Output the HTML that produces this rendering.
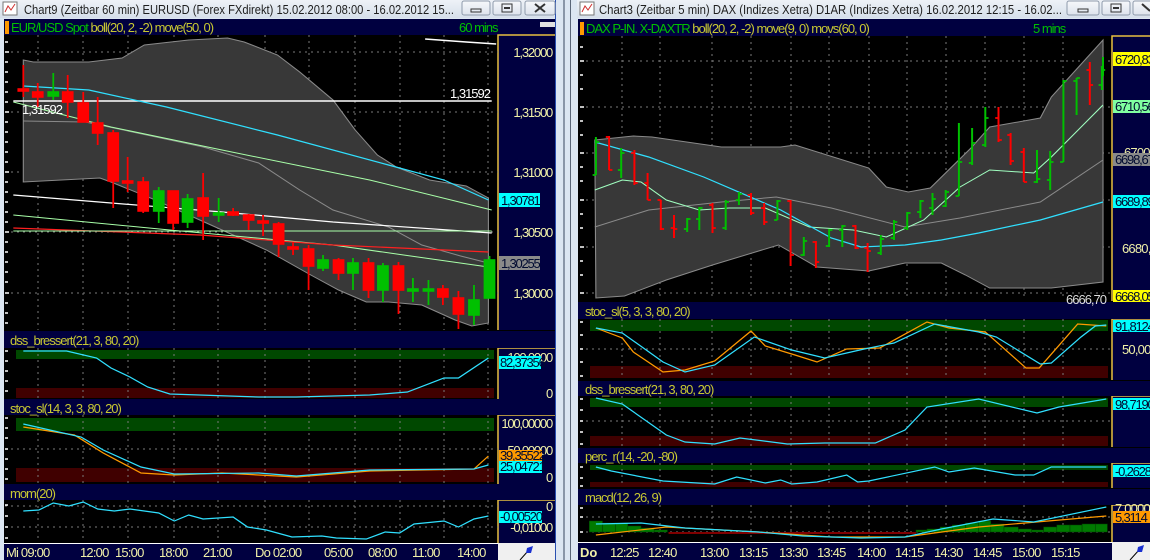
<!DOCTYPE html>
<html><head><meta charset="utf-8"><style>
html,body{margin:0;padding:0;background:#dce6f2;}
svg{display:block;font-family:"Liberation Sans",sans-serif;}
.t{font-size:12.5px;fill:#1e1e1e}
.h{font-size:13px;fill:#c8c832;letter-spacing:-1px}
.hg{font-size:13px;fill:#00c000;letter-spacing:-1px}
.p{font-size:13px;fill:#f0f0a8;text-anchor:end;letter-spacing:-1.2px}
.tm{font-size:13px;fill:#f0f0a8;letter-spacing:-0.8px}
.b{font-size:13px;fill:#000a30;letter-spacing:-1.2px}
</style></head><body>
<svg width="1150" height="560" viewBox="0 0 1150 560" xmlns="http://www.w3.org/2000/svg">
<defs>
<linearGradient id="tb" x1="0" y1="0" x2="0" y2="1"><stop offset="0" stop-color="#eef2f7"/><stop offset="1" stop-color="#d6dfea"/></linearGradient>
<linearGradient id="bt" x1="0" y1="0" x2="0" y2="1"><stop offset="0" stop-color="#f6f8fb"/><stop offset="1" stop-color="#dde3ec"/></linearGradient>
<clipPath id="cl"><rect x="5" y="35" width="493" height="508"/></clipPath>
<clipPath id="cr"><rect x="580" y="36" width="532" height="506"/></clipPath>
</defs>
<rect width="1150" height="560" fill="#dce6f2"/>
<rect x="555" y="0" width="1" height="560" fill="#2a50b0"/>
<rect x="563" y="0" width="2" height="560" fill="#8a96a8"/>
<rect x="570" y="0" width="1" height="560" fill="#5a6678"/>

<!-- LEFT WINDOW -->
<rect x="0" y="0" width="555" height="18" fill="url(#tb)"/>
<rect x="3" y="2" width="14" height="13" fill="#fff" stroke="#777"/>
<path d="M5 12 L8 6 L11 10 L15 4" stroke="#d03030" fill="none"/>
<text class="t" x="24" y="14" textLength="430" lengthAdjust="spacingAndGlyphs">Chart9 (Zeitbar 60 min)  EURUSD (Forex FXdirekt) 15.02.2012 08:00 - 16.02.2012 15...</text>
<rect x="462" y="1" width="28" height="14" rx="2" fill="url(#bt)" stroke="#8e9aab"/>
<rect x="471" y="9" width="10" height="3" fill="none" stroke="#333"/>
<rect x="493" y="1" width="28" height="14" rx="2" fill="url(#bt)" stroke="#8e9aab"/>
<rect x="502" y="4" width="10" height="8" fill="none" stroke="#333"/><rect x="504" y="7" width="6" height="2" fill="#333"/>
<rect x="525" y="1" width="30" height="14" rx="2" fill="url(#bt)" stroke="#8e9aab"/>
<path d="M535 4 L545 12 M545 4 L535 12" stroke="#333" stroke-width="2"/>

<rect x="4" y="19" width="551" height="524" fill="#000"/>
<rect x="4" y="19" width="551" height="16" fill="#000040"/>
<rect x="5" y="21" width="4" height="13" fill="#ff9900"/>
<text x="11" y="32"><tspan class="hg">EUR/USD Spot </tspan><tspan class="h">boll(20, 2, -2) move(50, 0)</tspan></text>
<text class="hg" x="459" y="32">60 mins</text>
<rect x="540" y="22" width="15" height="5" fill="#e0e0e0"/>

<rect x="498" y="35" width="57" height="295" fill="#000040"/>
<rect x="498" y="348" width="57" height="51" fill="#000040"/>
<rect x="498" y="415" width="57" height="69" fill="#000040"/>
<rect x="498" y="500" width="57" height="43" fill="#000040"/>
<g stroke="#e8c040" stroke-width="1.5" fill="none">
<path d="M498 330 V35 H555"/><path d="M498 399 V348 H555"/><path d="M498 484 V415 H555"/><path d="M498 543 V500 H555"/>
</g>
<rect x="4" y="331" width="551" height="17" fill="#000040"/>
<rect x="4" y="399" width="551" height="16" fill="#000040"/>
<rect x="4" y="484" width="551" height="16" fill="#000040"/>
<text class="h" x="10" y="345">dss_bressert(21, 3, 80, 20)</text>
<text class="h" x="10" y="413">stoc_sl(14, 3, 3, 80, 20)</text>
<text class="h" x="10" y="498">mom(20)</text>
<rect x="16" y="350" width="478" height="9" fill="#004800"/>
<rect x="16" y="388" width="478" height="10" fill="#400000"/>
<rect x="16" y="418" width="478" height="13" fill="#004800"/>
<rect x="16" y="468" width="478" height="14" fill="#400000"/>
<g stroke="#7a7a7a" stroke-dasharray="2,4" stroke-width="1">
<path d="M38 35V330M83 35V330M128 35V330M174 35V330M218 35V330M265 35V330M309 35V330M355 35V330M400 35V330M444 35V330M488 35V330"/>
<path d="M38 348V398M83 348V398M128 348V398M174 348V398M218 348V398M265 348V398M309 348V398M355 348V398M400 348V398M444 348V398M488 348V398"/>
<path d="M38 415V483M83 415V483M128 415V483M174 415V483M218 415V483M265 415V483M309 415V483M355 415V483M400 415V483M444 415V483M488 415V483"/>
<path d="M38 500V542M83 500V542M128 500V542M174 500V542M218 500V542M265 500V542M309 500V542M355 500V542M400 500V542M444 500V542M488 500V542"/>
<path d="M5 52H498M5 112H498M5 172H498M5 232H498M5 293H498M5 449H498M5 506H498M5 527H498"/>
</g>
<g stroke="#fff" stroke-width="1.5">
<path d="M5 42h3M5 52h4M5 62h3M5 72h3M5 82h3M5 92h3M5 102h3M5 112h4M5 122h3M5 132h3M5 142h3M5 152h3M5 162h3M5 172h4M5 182h3M5 192h3M5 202h3M5 212h3M5 222h3M5 232h4M5 242h3M5 252h3M5 262h3M5 272h3M5 282h3M5 293h4M5 303h3M5 313h3M5 323h3"/>
<path d="M5 351h3M5 361h3M5 371h3M5 381h3M5 391h3M5 418h3M5 428h3M5 438h3M5 449h3M5 459h3M5 469h3M5 479h3M5 505h3M5 516h3M5 527h3M5 538h3"/>
</g>

<g clip-path="url(#cl)"><g transform="scale(1.11,1)">
<polygon points="21,60 30,62 80,62 110,58 130,45 170,40 205,38 220,42 250,55 270,72 300,100 320,130 340,155 357,167 387,180 420,186 440,198 440,323 425,326 410,320 380,305 350,302 330,302 305,290 280,275 240,250 200,230 140,200 100,182 90,178 21,182" fill="#383838" stroke="#8a8a8a" stroke-width="1"/>
<polyline points="21,121 77,122 183,147 233,163 270,190 300,210 350,227 380,245 415,256 440,263" fill="none" stroke="#8a8a8a"/>
<polyline points="12,102 100,127 200,150 333,180 443,210" fill="none" stroke="#a8ffa8"/>
<polyline points="12,215 153,230 300,245 440,267" fill="none" stroke="#a8ffa8"/>
<polyline points="12,195 200,212 300,222 443,233" fill="none" stroke="#fff" stroke-width="1.2"/>
<polyline points="12,228 180,235 300,245 440,252" fill="none" stroke="#ff2020" stroke-width="1.2"/>
<line x1="12" y1="231" x2="443" y2="231" stroke="#a8ffa8"/>
<line x1="12" y1="101" x2="443" y2="101" stroke="#fff" stroke-width="1.5"/>
<polyline points="383,39 420,42 447,44" fill="none" stroke="#fff" stroke-width="1.5"/>
<polyline points="21,86 80,90 150,107 250,135 350,165 400,180 440,200" fill="none" stroke="#30e0ff" stroke-width="1.2"/>
<g stroke-width="1.6">
<g stroke="#ff0000" fill="#ff0000">
<line x1="21" y1="65" x2="21" y2="97"/><rect x="16.5" y="89" width="9" height="2"/>
<line x1="34" y1="83" x2="34" y2="107"/><rect x="29.5" y="92" width="9" height="5"/>
<line x1="61" y1="75" x2="61" y2="118"/><rect x="56.5" y="92" width="9" height="10"/>
<line x1="75" y1="92" x2="75" y2="122"/><rect x="70.5" y="103" width="9" height="19"/>
<line x1="88" y1="97" x2="88" y2="145"/><rect x="83.5" y="123" width="9" height="10"/>
<line x1="102" y1="130" x2="102" y2="208"/><rect x="97.5" y="133" width="9" height="48"/>
<line x1="115" y1="157" x2="115" y2="192"/><rect x="110.5" y="181" width="9" height="2"/>
<line x1="129" y1="177" x2="129" y2="213"/><rect x="124.5" y="182" width="9" height="29"/>
<line x1="156" y1="191" x2="156" y2="230"/><rect x="151.5" y="191" width="9" height="32"/>
<line x1="183" y1="173" x2="183" y2="240"/><rect x="178.5" y="198" width="9" height="18"/>
<line x1="210" y1="208" x2="210" y2="216"/><rect x="205.5" y="212" width="9" height="3"/>
<line x1="224" y1="214" x2="224" y2="230"/><rect x="219.5" y="215" width="9" height="5"/>
<line x1="237" y1="215" x2="237" y2="236"/><rect x="232.5" y="221" width="9" height="2"/>
<line x1="251" y1="222" x2="251" y2="257"/><rect x="246.5" y="224" width="9" height="20"/>
<line x1="264" y1="242" x2="264" y2="255"/><rect x="259.5" y="247" width="9" height="2"/>
<line x1="278" y1="245" x2="278" y2="290"/><rect x="273.5" y="249" width="9" height="17"/>
<line x1="305" y1="258" x2="305" y2="280"/><rect x="300.5" y="260" width="9" height="13"/>
<line x1="332" y1="258" x2="332" y2="298"/><rect x="327.5" y="263" width="9" height="27"/>
<line x1="359" y1="262" x2="359" y2="314"/><rect x="354.5" y="266" width="9" height="24"/>
<line x1="399" y1="285" x2="399" y2="305"/><rect x="394.5" y="289" width="9" height="8"/>
<line x1="413" y1="291" x2="413" y2="329"/><rect x="408.5" y="298" width="9" height="16"/>
</g>
<g stroke="#00c000" fill="#00c000">
<line x1="48" y1="73" x2="48" y2="100"/><rect x="43.5" y="92" width="9" height="4"/>
<line x1="143" y1="187" x2="143" y2="223"/><rect x="138.5" y="191" width="9" height="20"/>
<line x1="169" y1="194" x2="169" y2="228"/><rect x="164.5" y="199" width="9" height="23"/>
<line x1="197" y1="198" x2="197" y2="222"/><rect x="192.5" y="213" width="9" height="2"/>
<line x1="291" y1="255" x2="291" y2="271"/><rect x="286.5" y="260" width="9" height="8"/>
<line x1="318" y1="258" x2="318" y2="290"/><rect x="313.5" y="263" width="9" height="10"/>
<line x1="345" y1="263" x2="345" y2="302"/><rect x="340.5" y="266" width="9" height="24"/>
<line x1="372" y1="278" x2="372" y2="302"/><rect x="367.5" y="289" width="9" height="2"/>
<line x1="386" y1="280" x2="386" y2="305"/><rect x="381.5" y="289" width="9" height="2"/>
<line x1="427" y1="285" x2="427" y2="325"/><rect x="422.5" y="300" width="9" height="15"/>
<line x1="441" y1="256" x2="441" y2="298"/><rect x="436.5" y="260" width="9" height="38"/>
</g>
</g>
<polyline points="21,351 60,351 87,358 100,368 117,377 133,387 153,394 233,397 267,397 333,395 367,392 400,378 413,378 440,358" fill="none" stroke="#30e0ff" stroke-width="1.2"/>
<polyline points="21,427 67,435 93,453 127,473 157,475 200,473 267,477 333,471 427,469 440,456" fill="none" stroke="#ff9a00" stroke-width="1.2"/>
<polyline points="21,424 73,437 93,450 127,467 157,474 233,473 267,476 333,470 427,469 440,465" fill="none" stroke="#30e0ff" stroke-width="1.2"/>
<polyline points="21,511 35,510 48,503 62,506 75,502 88,509 103,511 117,509 143,513 157,521 170,515 183,519 210,517 223,527 240,530 263,537 290,536 303,538 330,539 347,532 360,533 373,524 400,521 413,527 427,519 440,516" fill="none" stroke="#30e0ff" stroke-width="1.2"/>
</g></g>
<text x="22" y="114" font-size="13" fill="#fff" letter-spacing="-1">1,31592</text>
<text x="490" y="98" font-size="13" fill="#fff" text-anchor="end" letter-spacing="-1">1,31592</text>
<text class="p" x="552" y="57">1,32000</text>
<text class="p" x="552" y="117">1,31500</text>
<text class="p" x="552" y="177">1,31000</text>
<text class="p" x="552" y="237">1,30500</text>
<text class="p" x="552" y="298">1,30000</text>
<rect x="499" y="193" width="41" height="14" fill="#00ffff"/><text class="b" x="501" y="205">1,30781</text>
<rect x="499" y="256" width="41" height="14" fill="#8a8a8a"/><text class="b" x="501" y="268">1,30255</text>
<text class="p" x="552" y="362">100,0000</text>
<rect x="499" y="356" width="42" height="13" fill="#00ffff"/><text class="b" x="500" y="367">82,37356</text>
<text class="p" x="552" y="398">0</text>
<text class="p" x="552" y="428">100,00000</text>
<text class="p" x="552" y="455">50,00000</text>
<rect x="499" y="450" width="43" height="11" fill="#ff9a00"/><text class="b" x="500" y="460">39,35522</text>
<rect x="499" y="461" width="43" height="12" fill="#00ffff"/><text class="b" x="500" y="471">25,04721</text>
<text class="p" x="552" y="482">0</text>
<text class="p" x="552" y="511">0</text>
<rect x="499" y="511" width="43" height="12" fill="#00ffff"/><text class="b" x="500" y="521">-0,00520</text>
<text class="p" x="552" y="532">-0,01000</text>
<rect x="4" y="543" width="494" height="17" fill="#000040"/>
<line x1="4" y1="543.5" x2="498" y2="543.5" stroke="#fff"/>
<text class="tm" x="6" y="557">Mi 09:00</text><text class="tm" x="80" y="557">12:00</text><text class="tm" x="115" y="557">15:00</text><text class="tm" x="159" y="557">18:00</text><text class="tm" x="203" y="557">21:00</text><text class="tm" x="255" y="557">Do 02:00</text><text class="tm" x="324" y="557">05:00</text><text class="tm" x="368" y="557">08:00</text><text class="tm" x="412" y="557">11:00</text><text class="tm" x="457" y="557">14:00</text>
<rect x="498" y="543" width="57" height="17" fill="#f0f0f0"/>
<path d="M520 560 L528 551" stroke="#000" stroke-width="1"/><path d="M527 548 L533 546 L531 553 L526 553Z" fill="#1a30d0"/>

<!-- RIGHT WINDOW -->
<rect x="577" y="0" width="573" height="18" fill="url(#tb)"/>
<rect x="580" y="2" width="14" height="13" fill="#fff" stroke="#777"/>
<path d="M582 12 L585 6 L588 10 L592 4" stroke="#d03030" fill="none"/>
<text class="t" x="599" y="14" textLength="463" lengthAdjust="spacingAndGlyphs">Chart3 (Zeitbar 5 min)  DAX (Indizes Xetra) D1AR (Indizes Xetra) 16.02.2012 12:15 - 16.02...</text>
<rect x="1067" y="1" width="32" height="14" rx="2" fill="url(#bt)" stroke="#8e9aab"/>
<rect x="1078" y="9" width="10" height="3" fill="none" stroke="#333"/>
<rect x="1102" y="1" width="28" height="14" rx="2" fill="url(#bt)" stroke="#8e9aab"/>
<rect x="1111" y="4" width="10" height="8" fill="none" stroke="#333"/><rect x="1113" y="7" width="6" height="2" fill="#333"/>
<rect x="1133" y="1" width="20" height="14" rx="2" fill="url(#bt)" stroke="#8e9aab"/>
<path d="M1142 4 L1150 11" stroke="#333" stroke-width="2"/>

<rect x="578" y="19" width="572" height="524" fill="#000"/>
<rect x="578" y="19" width="572" height="17" fill="#000040"/>
<rect x="580" y="22" width="4" height="13" fill="#ff9900"/>
<text x="586" y="33"><tspan class="hg">DAX P-IN. X-DAXTR </tspan><tspan class="h">boll(20, 2, -2) move(9, 0) movs(60, 0)</tspan></text>
<text class="hg" x="1033" y="33">5 mins</text>
<rect x="1112" y="36" width="38" height="265" fill="#000040"/>
<rect x="1112" y="319" width="38" height="61" fill="#000040"/>
<rect x="1112" y="396" width="38" height="51" fill="#000040"/>
<rect x="1112" y="463" width="38" height="25" fill="#000040"/>
<rect x="1112" y="505" width="38" height="37" fill="#000040"/>
<g stroke="#e8c040" stroke-width="1.5" fill="none">
<path d="M1112 301 V36 H1150"/><path d="M1112 380 V319 H1150"/><path d="M1112 447 V396 H1150"/><path d="M1112 488 V463 H1150"/><path d="M1112 542 V505 H1150"/>
</g>
<rect x="578" y="302" width="572" height="17" fill="#000040"/>
<rect x="578" y="381" width="572" height="15" fill="#000040"/>
<rect x="578" y="448" width="572" height="15" fill="#000040"/>
<rect x="578" y="489" width="572" height="16" fill="#000040"/>
<text class="h" x="585" y="316">stoc_sl(5, 3, 3, 80, 20)</text>
<text class="h" x="585" y="394">dss_bressert(21, 3, 80, 20)</text>
<text class="h" x="585" y="461">perc_r(14, -20, -80)</text>
<text class="h" x="585" y="502">macd(12, 26, 9)</text>
<rect x="590" y="320" width="518" height="11" fill="#004800"/>
<rect x="590" y="366" width="518" height="12" fill="#400000"/>
<rect x="590" y="398" width="518" height="9" fill="#004800"/>
<rect x="590" y="436" width="518" height="10" fill="#400000"/>
<rect x="590" y="465" width="518" height="5" fill="#004800"/>
<rect x="590" y="482" width="518" height="5" fill="#400000"/>
<g stroke="#7a7a7a" stroke-dasharray="2,4">
<path d="M622 36V300M660 36V300M712 36V300M751 36V300M791 36V300M829 36V300M869 36V300M907 36V300M946 36V300M985 36V300M1024 36V300M1063 36V300"/>
<path d="M622 319V378M660 319V378M712 319V378M751 319V378M791 319V378M829 319V378M869 319V378M907 319V378M946 319V378M985 319V378M1024 319V378M1063 319V378"/>
<path d="M622 396V446M660 396V446M712 396V446M751 396V446M791 396V446M829 396V446M869 396V446M907 396V446M946 396V446M985 396V446M1024 396V446M1063 396V446"/>
<path d="M622 463V487M660 463V487M712 463V487M751 463V487M791 463V487M829 463V487M869 463V487M907 463V487M946 463V487M985 463V487M1024 463V487M1063 463V487"/>
<path d="M622 505V541M660 505V541M712 505V541M751 505V541M791 505V541M829 505V541M869 505V541M907 505V541M946 505V541M985 505V541M1024 505V541M1063 505V541"/>
<path d="M580 61H1112M580 107H1112M580 153H1112M580 200H1112M580 247H1112M580 293H1112M580 349H1112M580 421H1112M580 517H1112M580 532H1112"/>
</g>
<g stroke="#fff" stroke-width="1.5">
<path d="M580 47h3M580 61h4M580 75h3M580 89h3M580 107h4M580 121h3M580 135h3M580 153h4M580 167h3M580 181h3M580 200h4M580 214h3M580 228h3M580 247h4M580 261h3M580 275h3M580 293h4M580 322h3M580 335h3M580 349h3M580 362h3M580 376h3M580 399h3M580 410h3M580 421h3M580 432h3M580 444h3M580 467h3M580 478h3M580 486h3M580 508h3M580 517h3M580 532h3"/>
</g>

<g clip-path="url(#cr)"><g transform="translate(575,0) scale(1.1,1) translate(-575,0)">
<polygon points="593,140 628,136 645,137 708,147 762,147 775,145 842,168 858,187 878,192 898,188 935,148 952,127 998,118 1008,97 1055,40 1055,282 1008,288 952,288 930,275 908,263 875,263 842,271 795,267 760,245 700,265 658,280 620,296 594,298" fill="#383838" stroke="#8a8a8a"/>
<polyline points="593,227 642,210 708,202 758,197 808,208 875,227 925,218 998,202 1055,160" fill="none" stroke="#8a8a8a"/>
<polyline points="593,190 618,180 635,182 658,200 688,210 715,208 748,208 788,227 828,230 858,237 892,220 925,187 952,170 992,173 1008,157 1055,105" fill="none" stroke="#a0ffc0"/>
<polyline points="593,142 642,157 692,177 762,210 808,238 835,247 875,245 908,240 942,233 998,220 1055,202" fill="none" stroke="#30e0ff" stroke-width="1.2"/>
<g stroke-width="1.8" fill="none">
<g stroke="#00c000">
<path d="M594 137V175M591 175H594M594 142H597"/>
<path d="M617 148V178M614 170H617M617 153H620"/>
<path d="M677 218V232M674 229H677M677 219H680"/>
<path d="M688 207V230M685 219H688M688 208H691"/>
<path d="M712 200V230M709 228H712M712 202H715"/>
<path d="M724 192V205M721 200H724M724 194H727"/>
<path d="M759 200V220M756 220H759M759 201H762"/>
<path d="M783 237V256M780 255H783M783 241H786"/>
<path d="M806 229V247M803 246H806M806 230H809"/>
<path d="M818 225V247M815 230H818M818 226H821"/>
<path d="M853 235V255M850 253H853M853 239H856"/>
<path d="M865 220V240M862 238H865M865 222H868"/>
<path d="M877 212V230M874 228H877M877 213H880"/>
<path d="M889 200V218M886 212H889M889 201H892"/>
<path d="M900 193V215M897 208H900M900 199H903"/>
<path d="M912 190V207M909 206H912M912 192H915"/>
<path d="M924 123V196M921 196H924M924 162H927"/>
<path d="M936 128V165M933 163H936M936 143H939"/>
<path d="M948 107V147M945 145H948M948 118H951"/>
<path d="M995 150V183M992 182H995M995 179H998"/>
<path d="M1007 151V190M1004 180H1007M1007 162H1010"/>
<path d="M1019 80V162M1016 162H1019M1019 81H1022"/>
<path d="M1031 78V115M1028 81H1031M1031 78H1034"/>
<path d="M1054 66V90M1051 85H1054M1054 70H1057"/>
<path d="M1055 57V76"/>
</g>
<g stroke="#ff0000">
<path d="M606 136V170M603 137H606M606 170H609"/>
<path d="M629 150V185M626 153H629M629 183H632"/>
<path d="M641 173V200M638 183H641M641 200H644"/>
<path d="M653 200V230M650 200H653M653 229H656"/>
<path d="M665 215V238M662 228H665M665 229H668"/>
<path d="M700 203V233M697 205H700M700 228H703"/>
<path d="M735 193V215M732 195H735M735 213H738"/>
<path d="M747 203V225M744 208H747M747 222H750"/>
<path d="M771 200V266M768 201H771M771 255H774"/>
<path d="M794 241V268M791 242H794M794 262H797"/>
<path d="M830 225V249M827 226H830M830 248H833"/>
<path d="M841 243V272M838 248H841M841 251H844"/>
<path d="M960 107V142M957 118H960M960 140H963"/>
<path d="M971 133V165M968 135H971M971 161H974"/>
<path d="M983 148V182M980 152H983M983 182H986"/>
<path d="M1043 62V105M1040 70H1043M1043 85H1046"/>
</g>
</g>
<polyline points="594,328 618,338 628,352 655,372 675,370 702,361 735,331 748,346 775,355 795,362 822,349 852,348 895,322 915,328 948,332 985,368 997,368 1032,324 1058,326" fill="none" stroke="#ff9a00" stroke-width="1.2"/>
<polyline points="594,328 618,333 655,362 675,372 702,365 738,337 772,350 802,358 838,349 865,343 902,324 942,332 958,337 998,364 1008,363 1035,337 1048,326 1058,325" fill="none" stroke="#30e0ff" stroke-width="1.2"/>
<polyline points="594,398 618,404 658,435 675,442 702,444 725,438 768,444 802,443 848,443 875,430 895,407 942,399 995,413 1015,407 1058,399" fill="none" stroke="#30e0ff" stroke-width="1.2"/>
<polyline points="594,467 608,471 655,481 702,484 722,477 748,483 762,480 772,484 795,482 822,475 832,482 842,481 902,467 915,472 938,468 975,475 992,475 1008,467 1058,467" fill="none" stroke="#30e0ff" stroke-width="1.2"/>
<g fill="#007a00" stroke="#004000" stroke-width="0.5">
<rect x="588" y="521" width="12" height="11"/><rect x="600" y="523" width="12" height="9"/><rect x="612" y="523" width="11" height="9"/><rect x="623" y="526" width="12" height="6"/><rect x="635" y="528" width="12" height="4"/><rect x="647" y="530" width="12" height="2"/>
<rect x="885" y="530" width="10" height="2"/><rect x="895" y="529" width="12" height="3"/><rect x="907" y="527" width="11" height="5"/><rect x="918" y="525" width="12" height="7"/><rect x="930" y="523" width="12" height="9"/><rect x="942" y="521" width="11" height="11"/><rect x="953" y="524" width="12" height="8"/><rect x="965" y="527" width="13" height="5"/><rect x="978" y="529" width="12" height="3"/><rect x="990" y="530" width="11" height="2"/><rect x="1001" y="527" width="12" height="5"/><rect x="1013" y="525" width="12" height="7"/><rect x="1025" y="525" width="11" height="7"/><rect x="1036" y="524" width="12" height="8"/><rect x="1048" y="524" width="11" height="8"/>
</g>
<rect x="660" y="532" width="225" height="2" fill="#800000"/>
<polyline points="594,535 658,527 742,532 808,537 875,537 942,527 1058,516" fill="none" stroke="#ff9a00" stroke-width="1.2"/>
<polyline points="594,524 635,523 675,528 742,532 782,536 835,538 875,537 908,529 955,519 992,522 1058,507" fill="none" stroke="#30e0ff" stroke-width="1.2"/>
</g></g>
<text x="1066" y="304" font-size="13" fill="#ddd" letter-spacing="-1">6666,70</text>
<rect x="1113" y="52" width="40" height="14" fill="#ffff00"/><text class="b" x="1115" y="64">6720,83</text>
<rect x="1113" y="100" width="40" height="13" fill="#80ffa0"/><text class="b" x="1115" y="111">6710,56</text>
<text class="tm" x="1124" y="157">6700,0</text>
<rect x="1113" y="153" width="40" height="13" fill="#8a8a8a"/><text class="b" x="1115" y="164">6698,67</text>
<rect x="1113" y="195" width="40" height="13" fill="#00ffff"/><text class="b" x="1115" y="206">6689,89</text>
<text class="tm" x="1122" y="253">6680,0</text>
<rect x="1113" y="290" width="40" height="12" fill="#ffff00"/><text class="b" x="1115" y="301">6668,05</text>
<rect x="1113" y="320" width="40" height="12" fill="#00ffff"/><text class="b" x="1115" y="331">91,8124</text>
<text class="tm" x="1122" y="354">50,00</text>
<rect x="1113" y="398" width="40" height="12" fill="#00ffff"/><text class="b" x="1115" y="409">98,7190</text>
<rect x="1113" y="465" width="40" height="12" fill="#00ffff"/><text class="b" x="1115" y="476">-0,2628</text>
<text class="tm" x="1115" y="513">7,0000</text>
<rect x="1113" y="511" width="40" height="12" fill="#ff9a00"/><text class="b" x="1115" y="522">5,3114</text>
<rect x="578" y="542" width="534" height="18" fill="#000040"/>
<line x1="578" y1="542.5" x2="1112" y2="542.5" stroke="#fff"/>
<text x="580" y="557" font-size="13" font-weight="bold" fill="#f0f0a8">Do</text>
<text class="tm" x="610" y="557">12:25</text><text class="tm" x="648" y="557">12:40</text><text class="tm" x="700" y="557">13:00</text><text class="tm" x="739" y="557">13:15</text><text class="tm" x="779" y="557">13:30</text><text class="tm" x="817" y="557">13:45</text><text class="tm" x="857" y="557">14:00</text><text class="tm" x="895" y="557">14:15</text><text class="tm" x="934" y="557">14:30</text><text class="tm" x="973" y="557">14:45</text><text class="tm" x="1012" y="557">15:00</text><text class="tm" x="1051" y="557">15:15</text>
<rect x="1112" y="542" width="38" height="18" fill="#f0f0f0"/>
<path d="M1130 560 L1139 550" stroke="#000"/><path d="M1138 547 L1144 545 L1142 552 L1137 552Z" fill="#1a30d0"/>
</svg>
</body></html>
